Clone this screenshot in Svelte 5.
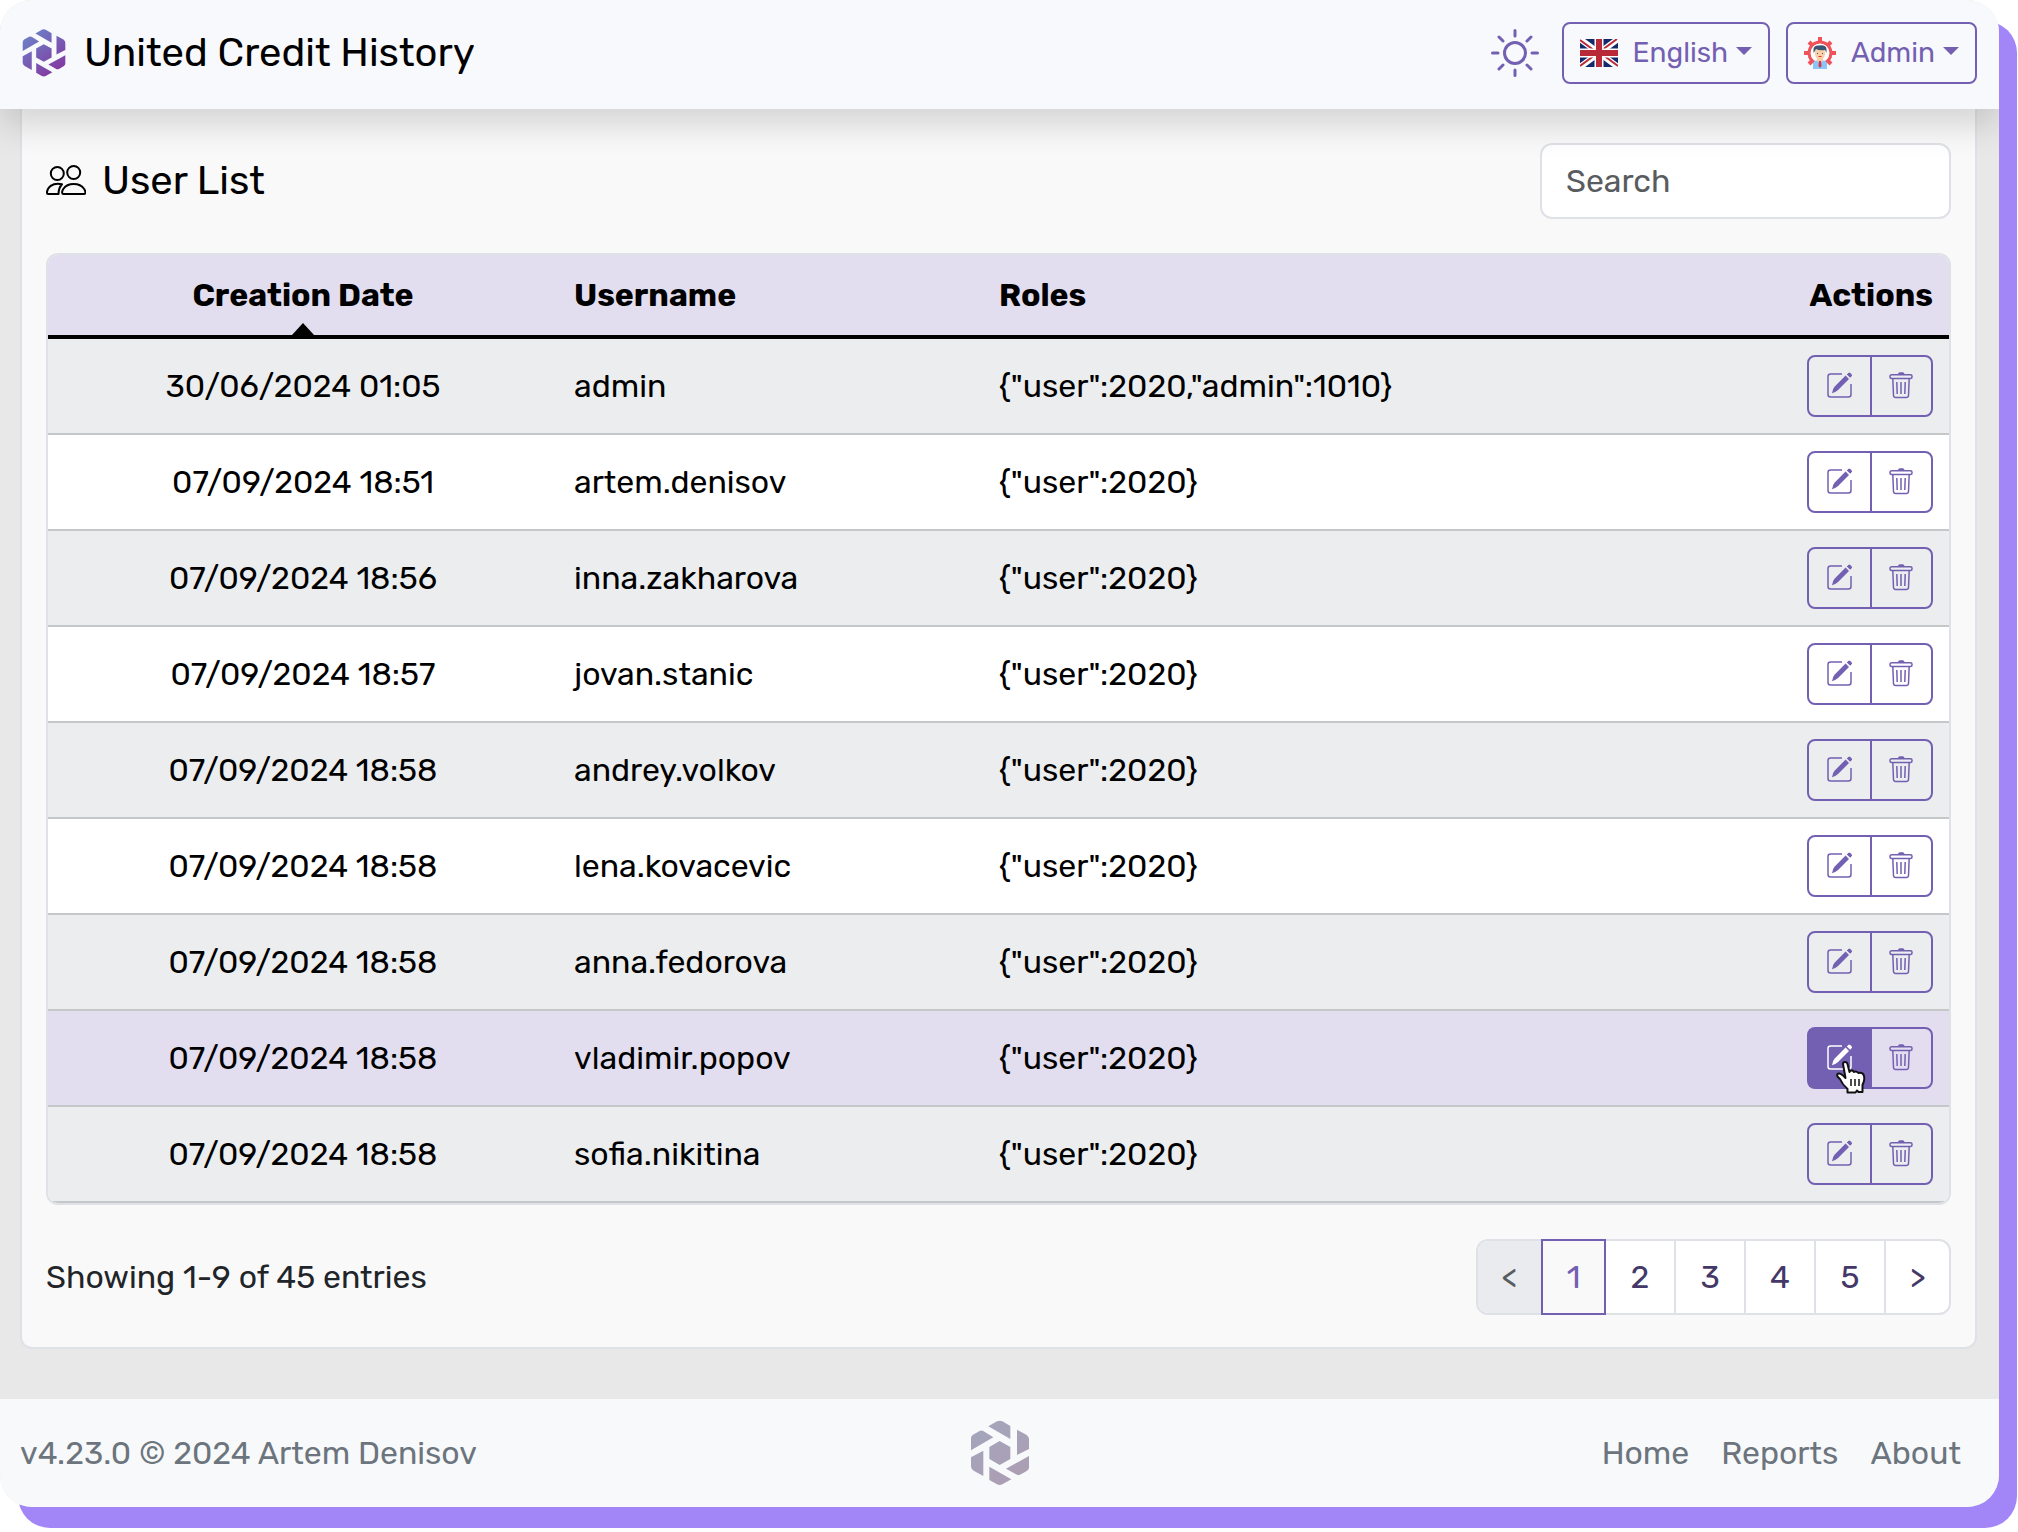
<script>
  const users = [
    { date: '30/06/2024 01:05', name: 'admin', roles: { user: 2020, admin: 1010 } },
    { date: '07/09/2024 18:51', name: 'artem.denisov', roles: { user: 2020 } },
    { date: '07/09/2024 18:56', name: 'inna.zakharova', roles: { user: 2020 } },
    { date: '07/09/2024 18:57', name: 'jovan.stanic', roles: { user: 2020 } },
    { date: '07/09/2024 18:58', name: 'andrey.volkov', roles: { user: 2020 } },
    { date: '07/09/2024 18:58', name: 'lena.kovacevic', roles: { user: 2020 } },
    { date: '07/09/2024 18:58', name: 'anna.fedorova', roles: { user: 2020 } },
    { date: '07/09/2024 18:58', name: 'vladimir.popov', roles: { user: 2020 } },
    { date: '07/09/2024 18:58', name: 'sofia.nikitina', roles: { user: 2020 } }
  ];
  const hovered = 7;
  const pages = [1, 2, 3, 4, 5];
  let current = $state(1);
  let query = $state('');
</script>

{#snippet logo(id, from, to)}
  <svg class="logo" viewBox="90 70 174 196" aria-hidden="true">
    <defs>
      <linearGradient {id} gradientUnits="userSpaceOnUse" x1="110" y1="90" x2="230" y2="250">
        <stop offset="0" stop-color={from} />
        <stop offset="1" stop-color={to} />
      </linearGradient>
    </defs>
    <g fill="url(#{id})">
      <path d="M142 88 168 73Q176 69 184 73L208 87V126Z" />
      <path d="M90 160V124Q90 117 96 113L116 102Q122 99 128 103L157 121Z" />
      <path d="M228 98 256 113Q264 118 264 126V156L228 174Z" />
      <path d="M176 132 208 150V186L176 204 145 186V150Z" />
      <path d="M127 161V237L98 221Q90 216 90 208V181Z" />
      <path d="M264 177V212Q264 218 257 222L240 232Q232 237 225 232L195 215Z" />
      <path d="M145 209 211 247 184 262Q176 266 168 262L145 249Z" />
    </g>
  </svg>
{/snippet}

<div class="window">
  <header>
    <a class="brand" href="#home">
      {@render logo('brand-mark', '#6c80c8', '#8438a0')}
      <span>United Credit History</span>
    </a>
    <div class="tools">
      <button class="theme" aria-label="Toggle theme">
        <svg viewBox="0 0 48 48" fill="none" stroke="currentColor" stroke-width="3" stroke-linecap="round">
          <circle cx="24" cy="24" r="10.5" />
          <path d="M24 1.5V7M24 41V46.500M1.500 24H7M41 24H46.500M8 8 12 12M36 36 40 40M8 40 12 36M36 12 40 8" />
        </svg>
      </button>
      <button class="menu" aria-haspopup="true">
        <svg class="flag" viewBox="0 0 38 28" aria-hidden="true">
          <path fill="#14296b" d="M0 0H38V28H0Z" />
          <path stroke="#fff" stroke-width="6" d="M0 0 38 28M38 0 0 28" />
          <path stroke="#b92a38" stroke-width="2" d="M0 1 15 12M38 27 23 16M37 0 22 11M0 27 15 16" />
          <path stroke="#fff" stroke-width="9" d="M19 0V28M0 14H38" />
          <path stroke="#b92a38" stroke-width="6" d="M19 0V28M0 14H38" />
        </svg>
        <span>English</span>
        <i class="caret"></i>
      </button>
      <button class="menu" aria-haspopup="true">
        <svg class="avatar" viewBox="0 0 32 34" aria-hidden="true">
          <g stroke="#f0525a" stroke-width="4">
            <path d="M16 1V6M0 17H5M27 17H32M5 6 9 10M27 6 23 10M5 28 9 24M27 28 23 24" />
            <circle cx="16" cy="17" r="11" fill="#fff" stroke-width="3" />
          </g>
          <path fill="#8cc5f8" d="M9 33V28Q9 25 12 24.500H20Q23 25 23 28V33Z" />
          <path fill="#f9c9a0" d="M13 21H19V25L16 27 13 25Z" />
          <rect x="11" y="12" width="10" height="11" rx="4.500" fill="#fbd0a8" />
          <path fill="#3b5673" d="M9.500 17V13Q10 9 15 9.500 22 8.500 22.500 13V17L21 14Q15 15 12 13L11 15Z" />
          <path fill="#d8343f" d="M15 25H17L17.500 30 16 32 14.500 30Z" />
          <path stroke="#3b5673" stroke-width="1" d="M13.500 17V18M18.500 17V18" />
          <path stroke="#d8343f" stroke-width="1" d="M14.500 20.500H17.500" />
        </svg>
        <span>Admin</span>
        <i class="caret"></i>
      </button>
    </div>
  </header>

  <main>
    <section class="card">
      <div class="card-head">
        <h1>
          <svg viewBox="0 0 40 32" fill="none" stroke="currentColor" stroke-width="2" stroke-linejoin="round" aria-hidden="true">
            <circle cx="11.300" cy="8.500" r="6.500" />
            <circle cx="27.700" cy="7.500" r="6.500" />
            <path d="M17.500 29C14 29 17 19 27.700 19S41.500 29 38 29Z" />
            <path d="M16 19.200C6 17 1 23 1 28Q1 29 2 29H12.500Q12.500 23 16 19.200Z" />
          </svg>
          User List
        </h1>
        <input type="search" placeholder="Search" aria-label="Search" bind:value={query} />
      </div>

      <div class="table-frame">
        <table>
          <colgroup><col class="c-date" /><col class="c-name" /><col /><col class="c-actions" /></colgroup>
          <thead>
            <tr>
              <th class="center sorted" aria-sort="ascending">Creation Date</th>
              <th>Username</th>
              <th>Roles</th>
              <th class="right">Actions</th>
            </tr>
          </thead>
          <tbody>
            {#each users as user, i}
              <tr class:hovered={i === hovered}>
                <td class="center">{user.date}</td>
                <td>{user.name}</td>
                <td>{JSON.stringify(user.roles)}</td>
                <td class="right">
                  <div class="group">
                    <button aria-label="Edit {user.name}" class:active={i === hovered}>
                      <svg viewBox="0 0 26 27" fill="none" stroke="currentColor" stroke-width="1.500" aria-hidden="true">
                        <path d="M15 2H3.500Q1 2 1 4.500V22.500Q1 25 3.500 25H21.500Q24 25 24 22.500V12" />
                        <path fill="currentColor" stroke="none" d="M5 21.200Q5.500 17 7.500 14.800L18.600 3.500 22 7 10.800 18.200Q8.500 20.200 5 21.200ZM19.800 2.400 21.300 .9Q22.300 0 23.300 .9L24.600 2.200Q25.500 3.200 24.600 4.200L23.200 5.800Z" />
                      </svg>
                      {#if i === hovered}
                        <svg class="pointer" viewBox="0 0 32 34" aria-hidden="true">
                          <path fill="#fff" stroke="#111" stroke-width="2" stroke-linejoin="round" d="M8 3Q8 1 10 1T12.500 3L14.500 11Q15 9 17.500 9.500L19 11Q21 9.500 23.500 12 28 11 29 15 30 19 27.500 24V31H23.500L22 29.500 20.500 31.500H12.500V28Q7 23 5 18 1 15 2.500 13 5 11 10.500 17Z" />
                          <path stroke="#111" stroke-width="1.500" d="M16 18V25M20 18V25M24 18V25" />
                        </svg>
                      {/if}
                    </button>
                    <button aria-label="Delete {user.name}">
                      <svg viewBox="-2 0 26 27" fill="none" stroke="currentColor" stroke-width="1.500" aria-hidden="true">
                        <rect x="0" y="2.800" width="22" height="3.600" rx="1.500" />
                        <path fill="currentColor" stroke="none" d="M8 2.200Q8 .2 10 .2H12.500Q14.500 .2 14.500 2.200Z" />
                        <path d="M2.800 6.500 3.500 23.500Q3.700 25.500 5.700 25.500H16.300Q18.300 25.500 18.500 23.500L19.200 6.500" />
                        <path d="M6.800 10 7.200 22M11 10V22M15.200 10 14.800 22" />
                      </svg>
                    </button>
                  </div>
                </td>
              </tr>
            {/each}
          </tbody>
        </table>
      </div>

      <div class="card-foot">
        <p>Showing 1-9 of 45 entries</p>
        <nav class="pages" aria-label="Pages">
          <button disabled aria-label="Previous">&lt;</button>
          {#each pages as page}
            <button class:current={page === current} onclick={() => (current = page)}>{page}</button>
          {/each}
          <button aria-label="Next">&gt;</button>
        </nav>
      </div>
    </section>
  </main>

  <footer>
    <span>v4.23.0 © 2024 Artem Denisov</span>
    {@render logo('foot-mark', '#a3a5bc', '#ac9eb3')}
    <nav aria-label="Footer">
      <a href="#home">Home</a>
      <a href="#reports">Reports</a>
      <a href="#about">About</a>
    </nav>
  </footer>
</div>

<style>
  :global(body) {
    background: #fff;
    font-family: Rubik, Roboto, sans-serif;
  }

  .window {
    --primary: #7460b2;
    --line: #dee2e6;
    margin: 0 19px 24px 0;
    border-radius: 32px;
    overflow: hidden;
    background: #e8e8e8;
    box-shadow: 18px 21px 0 #a286f8;
    color: #212529;
    font-size: 32px;
    line-height: 48px;
  }

  button,
  input {
    font: inherit;
    box-sizing: border-box;
  }

  a {
    color: inherit;
    text-decoration: none;
  }

  header {
    position: relative;
    display: flex;
    justify-content: space-between;
    align-items: center;
    padding: 22px 22px 25px;
    background: #f8f9fc;
    box-shadow: 0 16px 32px rgba(0, 0, 0, 0.15);
  }

  .brand {
    display: flex;
    align-items: center;
    gap: 18px;
    color: #000;
    font-size: 40px;
  }

  .brand .logo {
    width: 44px;
    height: 48px;
  }

  .tools {
    display: flex;
    align-items: center;
    gap: 16px;
  }

  .theme {
    display: flex;
    margin-right: 7px;
    padding: 0;
    border: 0;
    background: none;
    color: var(--primary);
  }

  .theme svg {
    width: 48px;
    height: 48px;
  }

  .menu {
    display: flex;
    align-items: center;
    height: 62px;
    padding: 0 16px;
    border: 2px solid var(--primary);
    border-radius: 8px;
    background: none;
    color: var(--primary);
    font-size: 28px;
  }

  .menu span {
    margin: 0 8px 0 15px;
  }

  .flag {
    width: 38px;
    height: 28px;
  }

  .avatar {
    width: 32px;
    height: 34px;
  }

  .caret {
    margin-bottom: 4px;
    border: 8px solid transparent;
    border-top-color: currentColor;
    border-bottom: 0;
  }

  .card {
    margin: 0 22px 50px 20px;
    padding: 34px 24px 32px;
    border: 2px solid var(--line);
    border-top: 0;
    border-radius: 0 0 12px 12px;
    background: #f9f9f9;
  }

  .card-head,
  .card-foot {
    display: flex;
    justify-content: space-between;
    align-items: center;
  }

  h1 {
    display: flex;
    align-items: center;
    gap: 16px;
    margin: 0;
    color: #000;
    font-size: 40px;
    font-weight: 400;
  }

  h1 svg {
    width: 40px;
    height: 32px;
  }

  input {
    width: 411px;
    height: 76px;
    padding: 0 24px;
    border: 2px solid var(--line);
    border-radius: 12px;
    background: #fff;
    color: #212529;
  }

  input::placeholder {
    color: #595c5f;
    opacity: 1;
  }

  .table-frame {
    margin: 34px 0;
    border: 2px solid var(--line);
    border-radius: 12px;
    overflow: hidden;
  }

  table {
    width: 100%;
    table-layout: fixed;
    border-collapse: separate;
    border-spacing: 0;
    color: #000;
  }

  .c-date {
    width: 510px;
  }

  .c-name {
    width: 425px;
  }

  .c-actions {
    width: 160px;
  }

  th,
  td {
    box-sizing: border-box;
    padding: 0 16px;
    text-align: left;
  }

  th {
    position: relative;
    height: 84px;
    border-bottom: 4px solid #000;
    background: #e2deef;
    font-weight: 700;
  }

  td {
    height: 96px;
    border-bottom: 2px solid #c5c7c9;
    background: #fff;
  }

  .center {
    text-align: center;
  }

  .right {
    text-align: right;
  }

  .sorted::after {
    content: '';
    position: absolute;
    bottom: 0;
    left: calc(50% - 11px);
    border: 11px solid transparent;
    border-top: 0;
    border-bottom: 12px solid #000;
  }

  tr:nth-child(odd) td {
    background: #ebedee;
  }

  tr.hovered td {
    background: #e2deef;
  }

  .group {
    display: inline-flex;
    vertical-align: middle;
    border: 2px solid var(--primary);
    border-radius: 8px;
    color: var(--primary);
  }

  .group button {
    position: relative;
    display: flex;
    align-items: center;
    justify-content: center;
    width: 61px;
    height: 58px;
    padding: 0 0 2px;
    border: 0;
    background: none;
    color: inherit;
  }

  .group button + button {
    padding-right: 2px;
    border-left: 2px solid var(--primary);
  }

  .group .active {
    background: var(--primary);
    color: #fff;
  }

  .group svg {
    width: 26px;
    height: 27px;
  }

  .group .pointer {
    position: absolute;
    left: 26px;
    top: 32px;
    width: 32px;
    height: 34px;
  }

  .card-foot p {
    margin: 0;
  }

  .pages {
    display: flex;
    border: 2px solid var(--line);
    border-radius: 12px;
    background: #fff;
  }

  .pages button {
    width: 70px;
    height: 72px;
    padding: 0;
    border: 0;
    border-right: 2px solid var(--line);
    background: none;
    color: #443868;
  }

  .pages button:first-child {
    width: 63px;
    border: 0;
    border-radius: 10px 0 0 10px;
    background: #e9ebef;
    color: #595c5f;
  }

  .pages button:last-child {
    width: 63px;
    border: 0;
  }

  .pages .current {
    width: 65px;
    height: 76px;
    margin: -2px 0;
    border: 2px solid var(--primary);
    background: #f9f9f9;
    color: var(--primary);
  }

  footer {
    display: grid;
    grid-template-columns: 1fr auto 1fr;
    align-items: center;
    padding: 21px 20px;
    background: #f8f9fb;
    color: #6c757d;
  }

  footer .logo {
    width: 58px;
    height: 66px;
  }

  footer nav {
    display: flex;
    justify-content: flex-end;
    gap: 32px;
    padding-right: 18px;
  }
</style>
